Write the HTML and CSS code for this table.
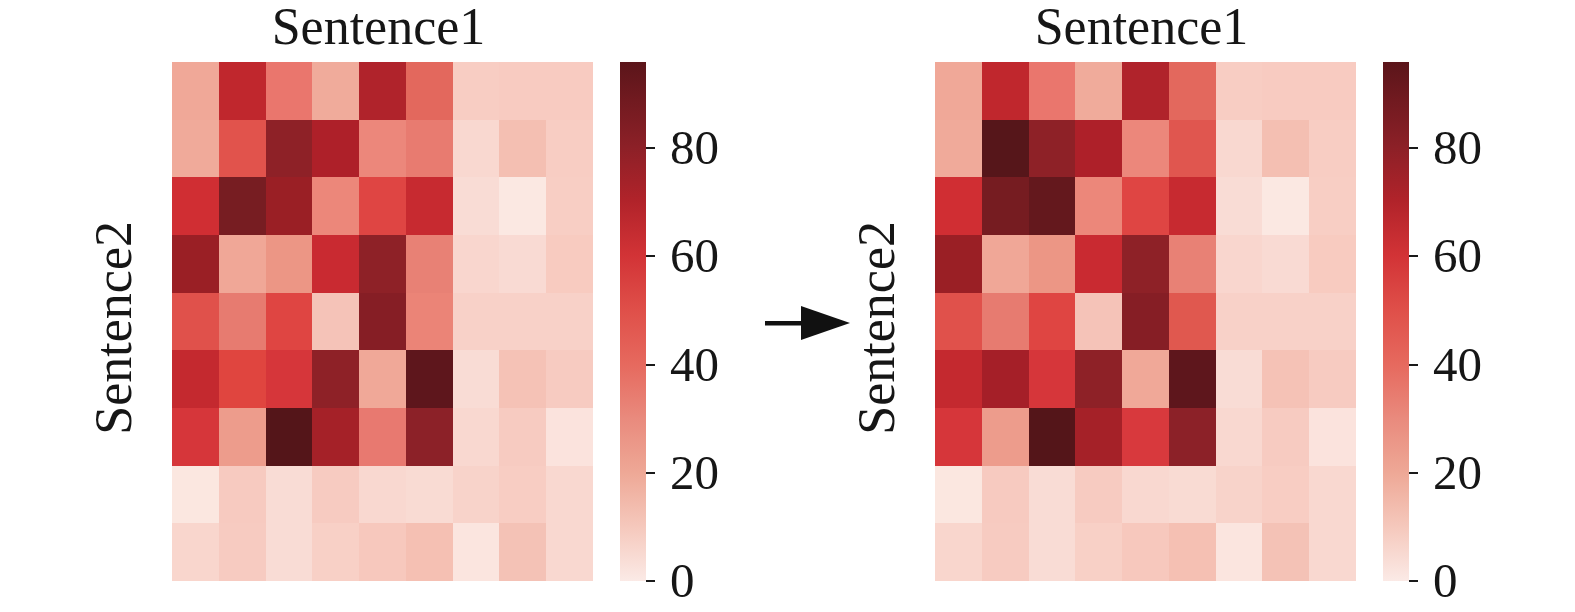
FILE: index.html
```html
<!DOCTYPE html>
<html>
<head>
<meta charset="utf-8">
<link rel="stylesheet" href="styles.css">
</head>
<body>
<div class="figure">
  <div class="panel">
    <div class="ylabel"><span>Sentence2</span></div>
    <div class="main">
      <div class="title">Sentence1</div>
      <div class="heatmap">
        <div style="background:#f0a898"></div><div style="background:#c0272d"></div><div style="background:#ea766d"></div><div style="background:#f0ab9b"></div><div style="background:#b0232b"></div><div style="background:#e3685d"></div><div style="background:#f8cdc3"></div><div style="background:#f8cbc1"></div><div style="background:#f8cbc1"></div>
        <div style="background:#f0aa9a"></div><div style="background:#e1534c"></div><div style="background:#8e2127"></div><div style="background:#ae2029"></div><div style="background:#ec877b"></div><div style="background:#e87b70"></div><div style="background:#f9d8d0"></div><div style="background:#f4bfb2"></div><div style="background:#f8cdc3"></div>
        <div style="background:#d02e33"></div><div style="background:#771d22"></div><div style="background:#9a1f25"></div><div style="background:#ec877a"></div><div style="background:#df4543"></div><div style="background:#c72a30"></div><div style="background:#f9dcd5"></div><div style="background:#fbe8e2"></div><div style="background:#f8cec4"></div>
        <div style="background:#9a1f25"></div><div style="background:#f0a797"></div><div style="background:#ec9685"></div><div style="background:#c92a31"></div><div style="background:#8e2127"></div><div style="background:#e88175"></div><div style="background:#f9d6ce"></div><div style="background:#f9dad3"></div><div style="background:#f8cbc0"></div>
        <div style="background:#e0514b"></div><div style="background:#e77b70"></div><div style="background:#df4542"></div><div style="background:#f5c3b8"></div><div style="background:#861e25"></div><div style="background:#eb8477"></div><div style="background:#f8d1c8"></div><div style="background:#f8d1c8"></div><div style="background:#f8d1c8"></div>
        <div style="background:#c4292f"></div><div style="background:#e0453f"></div><div style="background:#d6363a"></div><div style="background:#8e2127"></div><div style="background:#f0a898"></div><div style="background:#5e161c"></div><div style="background:#f9dcd5"></div><div style="background:#f5c2b6"></div><div style="background:#f7cbc1"></div>
        <div style="background:#d6363a"></div><div style="background:#ed9c8c"></div><div style="background:#541519"></div><div style="background:#a52128"></div><div style="background:#e87970"></div><div style="background:#8c2128"></div><div style="background:#f9d8d0"></div><div style="background:#f7cbc1"></div><div style="background:#fbe3dd"></div>
        <div style="background:#fbe7e0"></div><div style="background:#f7cac0"></div><div style="background:#f9dcd5"></div><div style="background:#f7cbc1"></div><div style="background:#f9d8d0"></div><div style="background:#f9dbd3"></div><div style="background:#f8d3ca"></div><div style="background:#f8cdc3"></div><div style="background:#f9d8d0"></div>
        <div style="background:#f9d6cd"></div><div style="background:#f7cbc1"></div><div style="background:#f9dcd5"></div><div style="background:#f8d0c6"></div><div style="background:#f7c8bd"></div><div style="background:#f5c0b3"></div><div style="background:#fbe5df"></div><div style="background:#f4c2b6"></div><div style="background:#f9d8d0"></div>
      </div>
    </div>
    <div class="colorbar"></div>
    <div class="ticks">
      <div class="tick"><i></i><span>80</span></div>
      <div class="tick"><i></i><span>60</span></div>
      <div class="tick"><i></i><span>40</span></div>
      <div class="tick"><i></i><span>20</span></div>
      <div class="tick"><i></i><span>0</span></div>
    </div>
  </div>

  <div class="arrow">
    <svg width="85" height="34" viewBox="0 0 85 34">
      <rect x="0" y="15" width="38" height="4.5" fill="#111"/>
      <polygon points="36,0 85,17 36,34" fill="#111"/>
    </svg>
  </div>

  <div class="panel panel-right">
    <div class="ylabel"><span>Sentence2</span></div>
    <div class="main">
      <div class="title">Sentence1</div>
      <div class="heatmap">
        <div style="background:#f0a898"></div><div style="background:#c0272d"></div><div style="background:#ea766d"></div><div style="background:#f0ab9b"></div><div style="background:#b0232b"></div><div style="background:#e3685d"></div><div style="background:#f8cdc3"></div><div style="background:#f8cbc1"></div><div style="background:#f8cbc1"></div>
        <div style="background:#f0aa9a"></div><div style="background:#56161a"></div><div style="background:#8e2127"></div><div style="background:#ae2029"></div><div style="background:#ec877b"></div><div style="background:#e0564f"></div><div style="background:#f9d8d0"></div><div style="background:#f4bfb2"></div><div style="background:#f8cdc3"></div>
        <div style="background:#d02e33"></div><div style="background:#761c21"></div><div style="background:#64181d"></div><div style="background:#ec877a"></div><div style="background:#df4543"></div><div style="background:#c72a30"></div><div style="background:#f9dcd5"></div><div style="background:#fbe8e2"></div><div style="background:#f8cec4"></div>
        <div style="background:#9a1f25"></div><div style="background:#f0a797"></div><div style="background:#ec9685"></div><div style="background:#c92a31"></div><div style="background:#8e2127"></div><div style="background:#e88175"></div><div style="background:#f9d6ce"></div><div style="background:#f9dad3"></div><div style="background:#f8cbc0"></div>
        <div style="background:#e0514b"></div><div style="background:#e77b70"></div><div style="background:#df4542"></div><div style="background:#f5c3b8"></div><div style="background:#861e25"></div><div style="background:#e0584f"></div><div style="background:#f8d1c8"></div><div style="background:#f8d1c8"></div><div style="background:#f8d1c8"></div>
        <div style="background:#c4292f"></div><div style="background:#a51f28"></div><div style="background:#d6363a"></div><div style="background:#8e2127"></div><div style="background:#f0a898"></div><div style="background:#5e161c"></div><div style="background:#f9dcd5"></div><div style="background:#f5c2b6"></div><div style="background:#f7cbc1"></div>
        <div style="background:#d6363a"></div><div style="background:#ed9c8c"></div><div style="background:#541519"></div><div style="background:#a52128"></div><div style="background:#d8393d"></div><div style="background:#8c2128"></div><div style="background:#f9d8d0"></div><div style="background:#f7cbc1"></div><div style="background:#fbe3dd"></div>
        <div style="background:#fbe7e0"></div><div style="background:#f7cac0"></div><div style="background:#f9dcd5"></div><div style="background:#f7cbc1"></div><div style="background:#f9d8d0"></div><div style="background:#f9dbd3"></div><div style="background:#f8d3ca"></div><div style="background:#f8cdc3"></div><div style="background:#f9d8d0"></div>
        <div style="background:#f9d6cd"></div><div style="background:#f7cbc1"></div><div style="background:#f9dcd5"></div><div style="background:#f8d0c6"></div><div style="background:#f7c8bd"></div><div style="background:#f5c0b3"></div><div style="background:#fbe5df"></div><div style="background:#f4c2b6"></div><div style="background:#f9d8d0"></div>
      </div>
    </div>
    <div class="colorbar"></div>
    <div class="ticks">
      <div class="tick"><i></i><span>80</span></div>
      <div class="tick"><i></i><span>60</span></div>
      <div class="tick"><i></i><span>40</span></div>
      <div class="tick"><i></i><span>20</span></div>
      <div class="tick"><i></i><span>0</span></div>
    </div>
  </div>
</div>
</body>
</html>
```

FILE: styles.css
```css
html, body {
  margin: 0;
  padding: 0;
  background: #ffffff;
  overflow: hidden;
}

body {
  width: 1575px;
  height: 612px;
  font-family: "Liberation Serif", "Times New Roman", Times, "DejaVu Serif", serif;
  color: #161616;
}

.figure {
  display: flex;
  align-items: flex-start;
  padding-left: 88px;
}

.panel {
  display: flex;
  align-items: flex-start;
  width: 658px;
  flex: none;
}

.panel-right {
  margin-left: 1px;
}

.ylabel {
  width: 52px;
  height: 519px;
  margin-top: 62px;
  margin-right: 32px;
  padding-top: 12px;
  box-sizing: border-box;
  display: flex;
  align-items: center;
  justify-content: center;
  flex: none;
}

.ylabel span {
  font-family: "Liberation Serif", "Times New Roman", Times, serif;
  writing-mode: vertical-rl;
  transform: rotate(180deg);
  font-size: 52px;
  line-height: 52px;
  white-space: nowrap;
}

.main {
  width: 421px;
  flex: none;
  display: flex;
  flex-direction: column;
}

.title {
  font-family: "Liberation Serif", "Times New Roman", Times, serif;
  font-size: 52px;
  line-height: 54px;
  height: 54px;
  margin-bottom: 8px;
  text-align: center;
  padding-right: 8px;
  white-space: nowrap;
}

.heatmap {
  width: 421px;
  height: 519px;
  display: grid;
  grid-template-columns: repeat(9, 1fr);
  grid-template-rows: repeat(9, 1fr);
}

.colorbar {
  width: 26px;
  height: 519px;
  margin-top: 62px;
  margin-left: 27px;
  flex: none;
  background: linear-gradient(to bottom,
    #5b151a 0%,
    #8c2027 16.3%,
    #b1232a 26.8%,
    #d23336 37.2%,
    #df4f49 47.7%,
    #e6695e 58.2%,
    #e98a7d 68.6%,
    #eea896 79.1%,
    #f5c8bc 89.5%,
    #fbeae6 100%);
}

.ticks {
  margin-top: 148px;
  height: 433px;
  width: 100px;
  flex: none;
  display: flex;
  flex-direction: column;
  justify-content: space-between;
}

.tick {
  height: 0;
  display: flex;
  align-items: center;
}

.tick i {
  display: block;
  width: 9px;
  height: 2px;
  background: #1a1a1a;
  flex: none;
}

.tick span {
  font-family: "Liberation Serif", "Times New Roman", Times, serif;
  margin-left: 15px;
  font-size: 49px;
  line-height: 56px;
  white-space: nowrap;
}

.arrow {
  margin-left: 19px;
  margin-top: 306px;
  width: 85px;
  height: 34px;
  flex: none;
  display: flex;
}
```
